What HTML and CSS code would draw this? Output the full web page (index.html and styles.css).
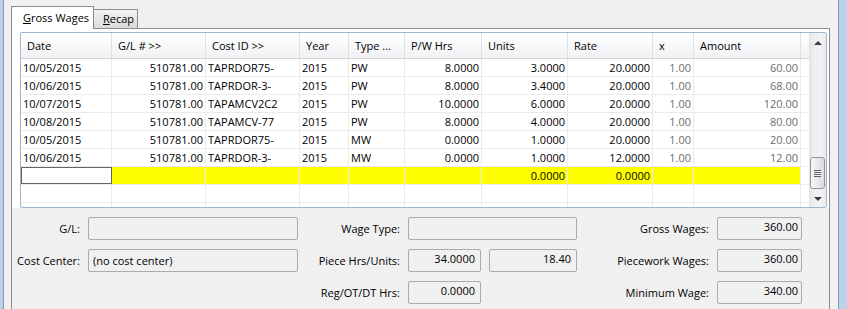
FILE: index.html
```html
<!DOCTYPE html>
<html>
<head>
    <title>Gross Wages</title>
    <link rel="stylesheet" href="styles.css">
</head>
<body>

<div class="window">
    <div class="frame-left"></div>

    <div class="client">
        <!-- Tabs -->
        <div class="tabs">
            <div class="tab active"><u>G</u>ross Wages</div>
            <div class="tab"><u>R</u>ecap</div>
        </div>

        <div class="tab-page">
            <!-- Wage lines grid -->
            <div class="grid-area">
                <div class="grid">
                    <div class="grid-rows">
                        <div class="row head">
                            <div>Date</div><div>G/L # &gt;&gt;</div><div>Cost ID &gt;&gt;</div><div>Year</div><div>Type ...</div>
                            <div>P/W Hrs</div><div>Units</div><div>Rate</div><div>x</div><div>Amount</div><div class="fill"></div>
                        </div>
                        <div class="row">
                            <div>10/05/2015</div><div class="r">510781.00</div><div>TAPRDOR75-</div><div>2015</div><div>PW</div>
                            <div class="r">8.0000</div><div class="r">3.0000</div><div class="r">20.0000</div><div class="r dim">1.00</div><div class="r dim">60.00</div><div class="fill"></div>
                        </div>
                        <div class="row">
                            <div>10/06/2015</div><div class="r">510781.00</div><div>TAPRDOR-3-</div><div>2015</div><div>PW</div>
                            <div class="r">8.0000</div><div class="r">3.4000</div><div class="r">20.0000</div><div class="r dim">1.00</div><div class="r dim">68.00</div><div class="fill"></div>
                        </div>
                        <div class="row">
                            <div>10/07/2015</div><div class="r">510781.00</div><div>TAPAMCV2C2</div><div>2015</div><div>PW</div>
                            <div class="r">10.0000</div><div class="r">6.0000</div><div class="r">20.0000</div><div class="r dim">1.00</div><div class="r dim">120.00</div><div class="fill"></div>
                        </div>
                        <div class="row">
                            <div>10/08/2015</div><div class="r">510781.00</div><div>TAPAMCV-77</div><div>2015</div><div>PW</div>
                            <div class="r">8.0000</div><div class="r">4.0000</div><div class="r">20.0000</div><div class="r dim">1.00</div><div class="r dim">80.00</div><div class="fill"></div>
                        </div>
                        <div class="row">
                            <div>10/05/2015</div><div class="r">510781.00</div><div>TAPRDOR75-</div><div>2015</div><div>MW</div>
                            <div class="r">0.0000</div><div class="r">1.0000</div><div class="r">20.0000</div><div class="r dim">1.00</div><div class="r dim">20.00</div><div class="fill"></div>
                        </div>
                        <div class="row">
                            <div>10/06/2015</div><div class="r">510781.00</div><div>TAPRDOR-3-</div><div>2015</div><div>MW</div>
                            <div class="r">0.0000</div><div class="r">1.0000</div><div class="r">12.0000</div><div class="r dim">1.00</div><div class="r dim">12.00</div><div class="fill"></div>
                        </div>
                        <!-- new line being entered -->
                        <div class="row new">
                            <div class="editing"></div><div></div><div></div><div></div><div></div>
                            <div></div><div class="r">0.0000</div><div class="r">0.0000</div><div></div><div></div><div class="fill"></div>
                        </div>
                        <div class="row">
                            <div></div><div></div><div></div><div></div><div></div>
                            <div></div><div></div><div></div><div></div><div></div><div class="fill"></div>
                        </div>
                        <div class="row">
                            <div></div><div></div><div></div><div></div><div></div>
                            <div></div><div></div><div></div><div></div><div></div><div class="fill"></div>
                        </div>
                    </div>

                    <div class="vscroll">
                        <div class="sb-btn"><span class="arrow-up"></span></div>
                        <div class="sb-track">
                            <div class="sb-thumb"><span class="grip"></span></div>
                        </div>
                        <div class="sb-btn"><span class="arrow-down"></span></div>
                    </div>
                </div>
            </div>

            <!-- Totals form -->
            <div class="form">
                <div class="lbl">G/L:</div>
                <div class="field"></div>
                <div class="lbl">Wage Type:</div>
                <div class="field"></div>
                <div class="lbl">Gross Wages:</div>
                <div class="field num total">360.00</div>

                <div class="lbl">Cost Center:</div>
                <div class="field">(no cost center)</div>
                <div class="lbl">Piece Hrs/Units:</div>
                <div class="pair">
                    <div class="field num small">34.0000</div>
                    <div class="field num">18.40</div>
                </div>
                <div class="lbl">Piecework Wages:</div>
                <div class="field num total">360.00</div>

                <div></div>
                <div></div>
                <div class="lbl">Reg/OT/DT Hrs:</div>
                <div class="pair">
                    <div class="field num small">0.0000</div>
                </div>
                <div class="lbl">Minimum Wage:</div>
                <div class="field num total">340.00</div>
            </div>
        </div>
    </div>

    <div class="frame-right"></div>
</div>

</body>
</html>
```

FILE: styles.css
```css
body {
    margin: 0;
    background: #f0f0f0;
    font-family: "Segoe UI", "Open Sans", sans-serif;
    font-size: 11px;
    color: #000;
}
.window {
    display: flex;
    height: 309px;
    overflow: hidden;
}
.frame-left {
    width: 3px;
    background: #b9d1ea;
    border-right: 1px solid #8f9aa6;
}
.frame-right {
    width: 8px;
    background: #b9d1ea;
    border-left: 1px solid #8f9aa6;
}
.client {
    flex: 1;
    padding: 6px 8px 0 7px;
}

/* tabs */
.tabs {
    display: flex;
    align-items: flex-end;
    height: 22px;
}
.tab {
    box-sizing: border-box;
    width: 45px;
    height: 19px;
    margin-left: -1px;
    padding-left: 9px;
    line-height: 17px;
    border: 1px solid #898c95;
    border-bottom: none;
    background: linear-gradient(#f3f3f3, #e6e6e6 50%, #dadada);
}
.tab.active {
    position: relative;
    z-index: 1;
    width: 83px;
    height: 23px;
    margin-left: 0;
    margin-bottom: -1px;
    padding-left: 11px;
    line-height: 21px;
    background: #fff;
}
.tab-page {
    height: 300px;
    border: 1px solid #898c95;
    border-bottom: none;
    background: #fff;
}

/* grid */
.grid-area {
    padding: 3px 2px 0 8px;
    background: #fff;
}
.grid {
    display: flex;
    box-sizing: border-box;
    height: 176px;
    border: 1px solid #9db6d1;
    border-radius: 2px;
    background: #fff;
    overflow: hidden;
}
.grid-rows {
    width: 788px;
    overflow: hidden;
}
.row {
    display: grid;
    grid-template-columns: 91px 94px 94px 49px 56px 77px 86px 85px 41px 107px 8px;
    box-sizing: border-box;
    height: 18px;
    border-bottom: 1px solid #ebebeb;
}
.row > div {
    box-sizing: border-box;
    padding: 0 2px;
    line-height: 17px;
    white-space: nowrap;
    overflow: hidden;
    border-right: 1px solid #ebebeb;
}
.row > .fill {
    border-right: none;
}
.row .r {
    text-align: right;
}
.row .dim {
    color: #6d6d6d;
}
.row.head {
    height: 26px;
    border-bottom: 1px solid #d5d5d5;
    background: linear-gradient(#ffffff, #f1f2f4);
}
.row.head > div {
    padding-left: 6px;
    line-height: 25px;
    border-right-color: #e0e1e3;
}
.row.head > .fill {
    border-right: none;
}
.row.new > div {
    background: #ffff00;
}
.row.new > .editing {
    background: #fff;
    outline: 1px solid #646464;
    outline-offset: -1px;
}
.row.new > .fill {
    background: #fff;
}

/* scrollbar */
.vscroll {
    width: 17px;
    display: flex;
    flex-direction: column;
    background: linear-gradient(to right, #e3e3e3, #efefef 30%, #f2f2f2 70%, #e9e9e9);
}
.sb-btn {
    height: 17px;
    display: flex;
    align-items: center;
    justify-content: center;
}
.arrow-up {
    width: 0;
    height: 0;
    margin-top: 2px;
    border-left: 4px solid transparent;
    border-right: 4px solid transparent;
    border-bottom: 4px solid #3c3c3c;
}
.arrow-down {
    width: 0;
    height: 0;
    border-left: 4px solid transparent;
    border-right: 4px solid transparent;
    border-top: 4px solid #3c3c3c;
}
.sb-track {
    flex: 1;
    display: flex;
    flex-direction: column;
    justify-content: flex-end;
    padding-bottom: 1px;
}
.sb-thumb {
    box-sizing: border-box;
    height: 32px;
    margin: 0 1px;
    border: 1px solid #959595;
    border-radius: 3px;
    background: linear-gradient(to right, #f6f6f6, #e9e9e9 50%, #dcdcdc);
    display: flex;
    align-items: center;
    justify-content: center;
}
.grip {
    width: 7px;
    height: 7px;
    background: repeating-linear-gradient(#5f5f5f 0 1px, #f2f2f2 1px 2px);
}

/* form below the grid */
.form {
    display: grid;
    grid-template-columns: 76px 210px 110px 169px 140px 85px;
    grid-auto-rows: 23px;
    row-gap: 9px;
    padding-top: 9px;
    height: 100px;
    background: #f0f0f0;
}
.lbl {
    text-align: right;
    padding-right: 8px;
    line-height: 24px;
    white-space: nowrap;
}
.field {
    box-sizing: border-box;
    height: 23px;
    padding: 0 4px;
    line-height: 21px;
    border: 1px solid #ababab;
    border-radius: 2px;
    background: #f0f0f0;
    white-space: nowrap;
}
.field.num {
    text-align: right;
    padding-right: 5px;
    line-height: 18px;
}
.field.total {
    padding-right: 3px;
}
.pair {
    display: flex;
    gap: 8px;
}
.pair .field {
    flex: 1;
}
.pair .field.small {
    flex: none;
    width: 73px;
}
```
